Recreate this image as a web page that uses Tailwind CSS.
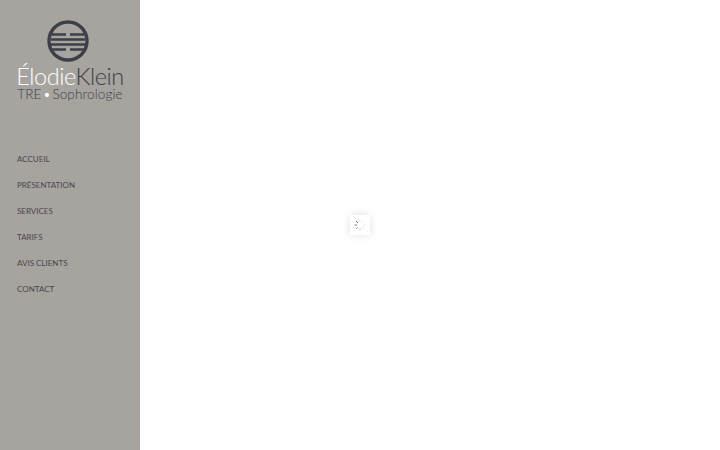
<!DOCTYPE html>
<html lang="fr">
<head>
    <meta charset="UTF-8">
    <title>Élodie Klein - TRE Sophrologie</title>
    <script src="https://cdn.jsdelivr.net/npm/@tailwindcss/browser@4"></script>
</head>
<body class="bg-white font-['Lato','Liberation_Sans',sans-serif] overflow-hidden">
    <div class="flex h-[450px] w-[720px]">
        <aside class="w-[140px] h-full bg-[#a7a39f] flex flex-col">
            <div class="pt-5 flex flex-col items-center">
                <svg class="ml-[-4px]" width="42" height="42" viewBox="0 0 42 42" fill="none">
                    <circle cx="21" cy="21" r="19" stroke="#3c3f48" stroke-width="3.4"/>
                    <path d="M5 14.5H19M23 14.5H37M4 19.5H38M4 24.5H38M5 29.5H19M23 29.5H37" stroke="#3c3f48" stroke-width="2.6"/>
                </svg>
                <p class="mt-[2px] h-[23px] text-[23.5px] leading-[24px] tracking-[-0.45px] font-light text-white whitespace-nowrap">Élodie<span class="text-[#3c3f48]">Klein</span></p>
                <p class="h-[14px] text-[13.5px] leading-[14px] tracking-[0.13px] font-light text-[#3c3f48] whitespace-nowrap">TRE<span class="text-white mx-[1.5px]">•</span>Sophrologie</p>
            </div>
            <nav class="mt-[45px] pl-[17px]">
                <ul class="text-[8px] text-[#47474e] uppercase">
                    <li class="h-[26px] flex items-center"><a href="#">Accueil</a></li>
                    <li class="h-[26px] flex items-center"><a href="#">Présentation</a></li>
                    <li class="h-[26px] flex items-center"><a href="#">Services</a></li>
                    <li class="h-[26px] flex items-center"><a href="#">Tarifs</a></li>
                    <li class="h-[26px] flex items-center"><a href="#">Avis clients</a></li>
                    <li class="h-[26px] flex items-center"><a href="#">Contact</a></li>
                </ul>
            </nav>
        </aside>
        <main class="flex-1"></main>
    </div>
    <div class="fixed inset-0 flex items-center justify-center">
        <div class="w-5 h-5 bg-white shadow-[0_0_8px_rgba(0,0,0,0.12)] flex items-center justify-center">
            <svg width="12" height="12" viewBox="0 0 12 12" stroke="#555" stroke-width="1">
                <path d="M6 0.5V3" stroke-opacity="0.15"/>
                <path d="M9.9 2.1L8.1 3.9" stroke-opacity="0.1"/>
                <path d="M11.5 6H9" stroke-opacity="0.1"/>
                <path d="M9.9 9.9L8.1 8.1" stroke-opacity="0.2"/>
                <path d="M6 11.5V9" stroke-opacity="0.35"/>
                <path d="M2.1 9.9L3.9 8.1" stroke-opacity="0.55"/>
                <path d="M0.5 6H3" stroke-opacity="0.75"/>
                <path d="M2.1 2.1L3.9 3.9" stroke-opacity="0.95"/>
            </svg>
        </div>
    </div>
</body>
</html>
